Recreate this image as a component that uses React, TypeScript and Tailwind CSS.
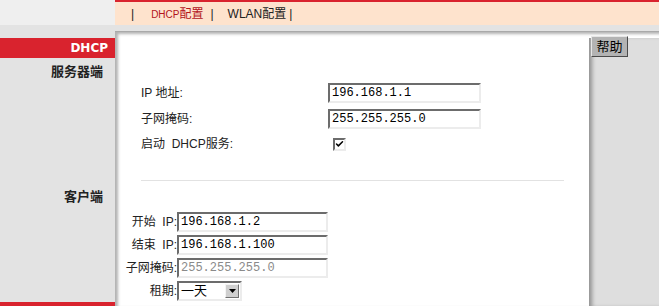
import { Check } from 'lucide-react'

const font = { fontFamily: '"Liberation Sans", "Noto Sans CJK SC", sans-serif' }

function Field({ value, muted, width = 'w-[153px]' }: { value: string; muted?: boolean; width?: string }) {
  return (
    <div
      className={`${width} h-[20px] flex items-center px-[2px] bg-white border-2 border-t-[#6c6c6c] border-l-[#6c6c6c] border-b-[#ececec] border-r-[#ececec] text-[12px] font-['Liberation_Mono',monospace] ${muted ? 'text-[#8a8a8a]' : 'text-black'}`}
    >
      {value}
    </div>
  )
}

export default function App() {
  return (
    <div className="w-[659px] h-[306px] overflow-hidden flex flex-col text-[12px] text-[#222]" style={font}>
      {/* header */}
      <div className="h-[25px] flex shrink-0">
        <div className="w-[115px] bg-[#efefef]" />
        <div className="flex-1 bg-[#fee3cd] border-t-2 border-[#d9232e] flex items-center pl-[16px] gap-[5px]">
          <span>|</span>
          <span className="ml-[12px] text-[#b3141c]">
            <span className="text-[10px]">DHCP</span>配置
          </span>
          <span className="ml-[2px]">|</span>
          <span className="ml-[9px]">WLAN配置</span>
          <span className="-ml-[2px]">|</span>
        </div>
      </div>

      <div className="flex flex-1 min-h-0">
        {/* left column */}
        <div className="w-[115px] bg-[#e3e3e3] flex flex-col shrink-0">
          <div className="mt-[13px] h-[20px] bg-[#d9232e] text-white font-['DejaVu_Sans',sans-serif] font-bold text-[12px] flex items-center justify-end pr-[7px]">
            DHCP
          </div>
          <div className="mt-[5px] pr-[12px] text-right font-bold text-[13px] text-[#222] leading-[18px]">服务器端</div>
          <div className="mt-[107px] pr-[12px] text-right font-bold text-[13px] text-[#222] leading-[18px]">客户端</div>
          <div className="mt-auto h-[4px] bg-[#d9232e]" />
        </div>

        {/* right side */}
        <div className="flex-1 flex flex-col">
          <div className="h-[7px] bg-[#e3e3e3] border-b border-[#a9a9a9] shrink-0" />
          <div className="flex-1 flex bg-white shadow-[inset_3px_2px_3px_rgba(0,0,0,0.3)]">
            {/* form */}
            <div className="flex-1 flex flex-col pl-[26px] pt-[51px]">
              <div className="flex items-center h-[20px]">
                <span className="w-[187px]">IP 地址:</span>
                <Field value="196.168.1.1" />
              </div>
              <div className="flex items-center h-[20px] mt-[6px]">
                <span className="w-[187px]">子网掩码:</span>
                <Field value="255.255.255.0" />
              </div>
              <div className="flex items-center h-[20px] mt-[5px]">
                <span className="w-[192px]">启动&nbsp; DHCP服务:</span>
                <div className="w-[13px] h-[13px] border-2 border-t-[#6c6c6c] border-l-[#6c6c6c] border-b-[#ececec] border-r-[#ececec] bg-white flex items-center justify-center">
                  <Check size={10} strokeWidth={4} className="text-black" />
                </div>
              </div>
              <div className="mt-[26px] mr-[25px] border-t border-[#e2e2e2]" />

              <div className="mt-[31px] -ml-[21px] grid grid-cols-[57px_auto] gap-y-[3px] items-center justify-start">
                <span className="text-right">开始&nbsp; IP:</span>
                <Field value="196.168.1.2" width="w-[151px]" />
                <span className="text-right">结束&nbsp; IP:</span>
                <Field value="196.168.1.100" width="w-[151px]" />
                <span className="text-right">子网掩码:</span>
                <Field value="255.255.255.0" muted width="w-[151px]" />
                <span className="text-right">租期:</span>
                <div className="w-[65px] h-[20px] flex items-center justify-between bg-white border-2 border-t-[#6c6c6c] border-l-[#6c6c6c] border-b-[#ececec] border-r-[#ececec] pl-[2px] pr-[1px] text-[13px] text-black">
                  <span>一天</span>
                  <span className="w-[14px] h-[14px] bg-[#cfcfcf] border border-t-[#f4f4f4] border-l-[#f4f4f4] border-b-[#707070] border-r-[#707070] flex items-center justify-center">
                    <svg width="7" height="4" viewBox="0 0 7 4">
                      <path d="M0 0h7L3.5 4z" fill="#000" />
                    </svg>
                  </span>
                </div>
              </div>
            </div>

            {/* help column */}
            <div className="w-[70px] flex flex-col shrink-0">
              <div className="h-[6px]" />
              <div className="flex-1 bg-[#dedede] shadow-[inset_5px_0_4px_-2px_rgba(0,0,0,0.35)]">
                <button className="-mt-[3px] ml-[2px] w-[37px] h-[21px] bg-[#b3b3b3] border border-t-[#e6e6e6] border-l-[#e6e6e6] border-b-[#4a4a4a] border-r-[#4a4a4a] text-[13px] text-black leading-none">
                  帮助
                </button>
              </div>
            </div>
          </div>
        </div>
      </div>
    </div>
  )
}
